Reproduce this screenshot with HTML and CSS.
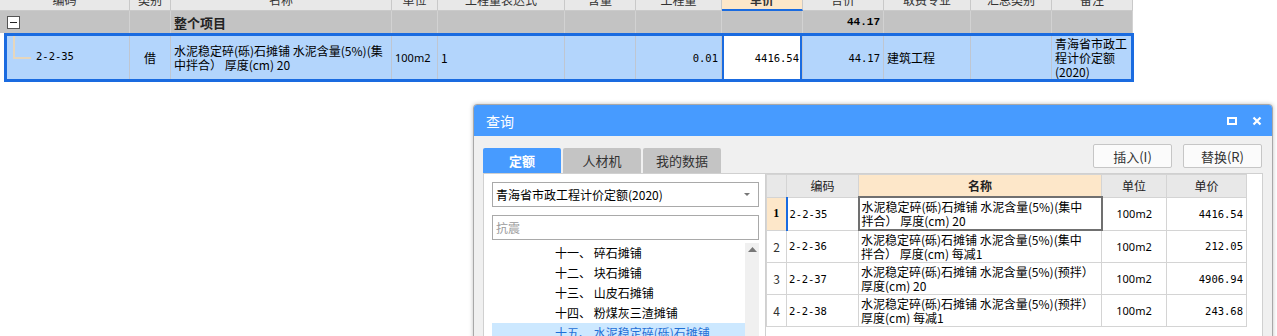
FILE: index.html
```html
<!DOCTYPE html>
<html lang="zh-CN">

<head>
    <meta charset="UTF-8">
    <title>查询</title>
    <link rel="stylesheet" href="styles.css">
</head>

<body>
    <div class="sheet">
        <div class="sheet-inner">
            <div class="row head">
                <div class="cell">编码</div>
                <div class="cell">类别</div>
                <div class="cell">名称</div>
                <div class="cell">单位</div>
                <div class="cell">工程量表达式</div>
                <div class="cell">含量</div>
                <div class="cell">工程量</div>
                <div class="cell active"><b>单价</b></div>
                <div class="cell">合价</div>
                <div class="cell">取费专业</div>
                <div class="cell">汇总类别</div>
                <div class="cell">备注</div>
            </div>
            <div class="row group">
                <div class="cell"><span class="fold"></span></div>
                <div class="cell"></div>
                <div class="cell title-cell">整个项目</div>
                <div class="cell"></div>
                <div class="cell"></div>
                <div class="cell"></div>
                <div class="cell"></div>
                <div class="cell"></div>
                <div class="cell right sum">44.17</div>
                <div class="cell"></div>
                <div class="cell"></div>
                <div class="cell"></div>
            </div>
            <div class="row current">
                <div class="cell code-cell"><span class="branch"></span><span class="mono">2-2-35</span></div>
                <div class="cell center">借</div>
                <div class="cell lines">水泥稳定碎(砾)石摊铺 水泥含量(5%)(集<br>中拌合） 厚度(cm) 20</div>
                <div class="cell unit">100m2</div>
                <div class="cell">1</div>
                <div class="cell"></div>
                <div class="cell right mono">0.01</div>
                <div class="cell right mono price">4416.54</div>
                <div class="cell right mono">44.17</div>
                <div class="cell">建筑工程</div>
                <div class="cell"></div>
                <div class="cell lines">青海省市政工<br>程计价定额<br>(2020)</div>
            </div>
        </div>
    </div>

    <div class="dialog">
        <div class="titlebar">
            <span class="title">查询</span>
            <span class="win-btns">
                <svg width="10" height="8" viewBox="0 0 10 8"><rect x="1" y="1" width="8" height="6" fill="none" stroke="#fff" stroke-width="2"/></svg>
                <svg width="10" height="10" viewBox="0 0 10 10"><path d="M1.5 1.5L8.5 8.5M8.5 1.5L1.5 8.5" stroke="#fff" stroke-width="2.2"/></svg>
            </span>
        </div>
        <div class="dlg-body">
            <div class="toolbar">
                <div class="tabs">
                    <span class="tab on">定额</span>
                    <span class="tab">人材机</span>
                    <span class="tab">我的数据</span>
                </div>
                <div class="actions">
                    <button class="btn">插入(I)</button>
                    <button class="btn">替换(R)</button>
                </div>
            </div>
            <div class="panes">
                <div class="lib-pane">
                    <div class="select">青海省市政工程计价定额(2020)<span class="caret"></span></div>
                    <input class="search" type="text" placeholder="抗震">
                    <div class="tree">
                        <ul class="tree-list">
                            <li>十一、 碎石摊铺</li>
                            <li>十二、 块石摊铺</li>
                            <li>十三、 山皮石摊铺</li>
                            <li>十四、 粉煤灰三渣摊铺</li>
                            <li class="sel">十五、 水泥稳定碎(砾)石摊铺</li>
                        </ul>
                        <div class="vscroll">
                            <svg width="9" height="5" viewBox="0 0 9 5"><path d="M0 5L4.5 0L9 5Z" fill="#777"/></svg>
                        </div>
                    </div>
                </div>
                <div class="list-pane">
                    <table class="list">
                        <colgroup>
                            <col style="width:20px">
                            <col style="width:72px">
                            <col style="width:243px">
                            <col style="width:65px">
                            <col style="width:80px">
                        </colgroup>
                        <thead>
                            <tr>
                                <th></th>
                                <th>编码</th>
                                <th class="hot">名称</th>
                                <th>单位</th>
                                <th>单价</th>
                            </tr>
                        </thead>
                        <tbody>
                            <tr class="on">
                                <td class="no">1</td>
                                <td class="code mark">2-2-35</td>
                                <td class="name picked">水泥稳定碎(砾)石摊铺 水泥含量(5%)(集中<br>拌合） 厚度(cm) 20</td>
                                <td class="unit">100m2</td>
                                <td class="price">4416.54</td>
                            </tr>
                            <tr>
                                <td class="no">2</td>
                                <td class="code">2-2-36</td>
                                <td class="name">水泥稳定碎(砾)石摊铺 水泥含量(5%)(集中<br>拌合） 厚度(cm) 每减1</td>
                                <td class="unit">100m2</td>
                                <td class="price">212.05</td>
                            </tr>
                            <tr>
                                <td class="no">3</td>
                                <td class="code">2-2-37</td>
                                <td class="name">水泥稳定碎(砾)石摊铺 水泥含量(5%)(预拌）<br>厚度(cm) 20</td>
                                <td class="unit">100m2</td>
                                <td class="price">4906.94</td>
                            </tr>
                            <tr>
                                <td class="no">4</td>
                                <td class="code">2-2-38</td>
                                <td class="name">水泥稳定碎(砾)石摊铺 水泥含量(5%)(预拌）<br>厚度(cm) 每减1</td>
                                <td class="unit">100m2</td>
                                <td class="price">243.68</td>
                            </tr>
                        </tbody>
                    </table>
                </div>
            </div>
        </div>
    </div>
</body>

</html>
```

FILE: styles.css
```css
body {
    margin: 0;
    height: 336px;
    overflow: hidden;
    position: relative;
    background: #fff;
    color: #000;
    font: 12px "Noto Sans CJK SC", "Noto Sans", sans-serif;
}

/* top grid */

.sheet {
    overflow: hidden;
}

.sheet-inner {
    margin-top: -11px;
}

.row {
    display: grid;
    grid-template-columns: 130px 41px 221px 46px 127px 71px 86px 81px 81px 87px 81px 81px;
    width: 1133px;
}

.cell {
    box-sizing: border-box;
    display: flex;
    align-items: center;
    padding: 0 3px;
    overflow: hidden;
    white-space: nowrap;
    border-right: 1px solid #c9c9c9;
}

.head .cell {
    height: 22px;
    justify-content: center;
    background: #e8e8e8;
    color: #333;
    border-bottom: 1px solid #cacaca;
}

.head .cell.active {
    background: #fde7c9;
    border-bottom: 2px solid #1a6be0;
}

.group .cell {
    height: 22px;
    background: #c3c3c3;
    border-right-color: #d2d2d2;
}

.fold {
    box-sizing: border-box;
    display: flex;
    align-items: center;
    justify-content: center;
    width: 13px;
    height: 13px;
    margin-left: 4px;
    background: #fff;
    border: 1px solid #555;
}

.fold::before {
    content: "";
    width: 7px;
    height: 1px;
    background: #222;
}

.title-cell {
    font-size: 13px;
    font-weight: bold;
    color: #222;
}

.sum {
    font: bold 11px "Liberation Mono", monospace;
}

.current {
    box-sizing: border-box;
    width: 1130px;
    height: 49px;
    margin-left: 4px;
    border: 3px solid #1a6be0;
    background: #b3d5fc;
    grid-template-columns: 123px 41px 221px 46px 127px 71px 86px 81px 81px 87px 81px 79px;
}

.current .cell {
    border-right-color: #bfc6d1;
}

.current .cell:last-child {
    border-right: none;
}

.code-cell {
    align-items: flex-start;
    padding-left: 6px;
}

.branch {
    flex: none;
    width: 16px;
    height: 21px;
    border-left: 2px solid #e6d6bc;
    border-bottom: 2px solid #e6d6bc;
    margin-right: 5px;
}

.code-cell .mono {
    margin-top: 14px;
}

.lines {
    line-height: 14px;
    padding-top: 1px;
}

.center {
    justify-content: center;
}

.right {
    justify-content: flex-end;
}

.mono {
    font: 10.5px "DejaVu Sans Mono", monospace;
}

.unit {
    font: 11px "Noto Sans", sans-serif;
}

.price {
    background: #fff;
    box-shadow: inset 2px 0 #1a6be0, inset -2px 0 #1a6be0;
}

/* dialog */

.dialog {
    position: absolute;
    left: 473px;
    top: 104px;
    width: 800px;
    height: 260px;
    box-sizing: border-box;
    border: 1px solid #a8a8a8;
    border-radius: 4px 4px 0 0;
    background: #f0f0f0;
    box-shadow: 0 0 4px rgba(0, 0, 0, 0.25);
}

.titlebar {
    display: flex;
    align-items: center;
    justify-content: space-between;
    height: 31px;
    padding: 0 10px 0 12px;
    background: #479bff;
    border-radius: 3px 3px 0 0;
}

.title {
    color: #fff;
    font-size: 14px;
}

.win-btns {
    display: flex;
    align-items: center;
    gap: 15px;
}

.dlg-body {
    padding: 0 9px;
}

.toolbar {
    display: flex;
    justify-content: space-between;
    align-items: flex-end;
    height: 37px;
}

.tabs {
    display: flex;
    gap: 2px;
}

.tab {
    display: flex;
    align-items: center;
    justify-content: center;
    width: 78px;
    height: 25px;
    background: #c4c4c4;
    color: #333;
    font-size: 13px;
    border-radius: 2px 2px 0 0;
}

.tab.on {
    background: #479bff;
    color: #fff;
    font-weight: bold;
}

.actions {
    align-self: flex-start;
    display: flex;
    gap: 11px;
    margin-top: 8px;
    margin-right: 1px;
}

.btn {
    width: 79px;
    height: 24px;
    padding: 0;
    border: 1px solid #c6c6c6;
    border-radius: 2px;
    background: #fbfbfb;
    color: #333;
    font: 13px "Noto Sans CJK SC", sans-serif;
}

.panes {
    display: flex;
    height: 200px;
}

.lib-pane {
    box-sizing: border-box;
    width: 283px;
    padding: 8px 0 0 8px;
    background: #fff;
    border: 1px solid #d0d0d0;
}

.select {
    box-sizing: border-box;
    position: relative;
    display: flex;
    align-items: center;
    width: 267px;
    height: 25px;
    padding-left: 3px;
    border: 1px solid #a9a9a9;
    font-size: 12px;
}

.caret {
    position: absolute;
    right: 8px;
    top: 10px;
    border-left: 3px solid transparent;
    border-right: 3px solid transparent;
    border-top: 3px solid #777;
}

.search {
    display: block;
    box-sizing: border-box;
    width: 267px;
    height: 25px;
    margin: 8px 0 0 0;
    padding: 0 3px;
    border: 1px solid #a9a9a9;
    font: 12px "Noto Sans CJK SC", sans-serif;
    outline: none;
}

.search::placeholder {
    color: #9a9a9a;
}

.tree {
    display: flex;
    width: 267px;
    margin-top: 3px;
}

.tree-list {
    flex: 1;
    list-style: none;
    margin: 0;
    padding: 0;
}

.tree-list li {
    height: 20px;
    line-height: 20px;
    padding-left: 63px;
    white-space: nowrap;
}

.tree-list li.sel {
    background: #cce8ff;
    color: #1f6fd6;
}

.vscroll {
    width: 14px;
    height: 120px;
    background: #f0f0f0;
    display: flex;
    justify-content: center;
    padding-top: 4px;
    box-sizing: border-box;
}

.list-pane {
    flex: 1;
    background: #fff;
    border: 1px solid #d0d0d0;
    border-left: none;
}

.list {
    border-collapse: collapse;
    table-layout: fixed;
    width: 480px;
}

.list th,
.list td {
    border: 1px solid #d4d4d4;
    padding: 0 2px;
    white-space: nowrap;
    overflow: hidden;
}

.list th {
    height: 21px;
    background: #e8e8e8;
    font-weight: normal;
    color: #222;
}

.list th.hot {
    background: #fde7c9;
    font-weight: bold;
}

.list td {
    height: 31px;
}

.list .no {
    text-align: center;
    color: #333;
    padding: 0;
}

.list tr.on .no {
    background: #fde7c9;
    font: bold 12px "Liberation Serif", serif;
    color: #000;
}

.list .code {
    font: 10.5px "DejaVu Sans Mono", monospace;
}

.list .mark {
    border-left: 2px solid #1a6be0;
}

.list .name {
    line-height: 14px;
}

.list .picked {
    border: 2px solid #707070;
}

.list .unit {
    text-align: center;
}

.list .price {
    text-align: right;
    padding-right: 3px;
    font: 10.5px "DejaVu Sans Mono", monospace;
    background: none;
    box-shadow: none;
}
```
